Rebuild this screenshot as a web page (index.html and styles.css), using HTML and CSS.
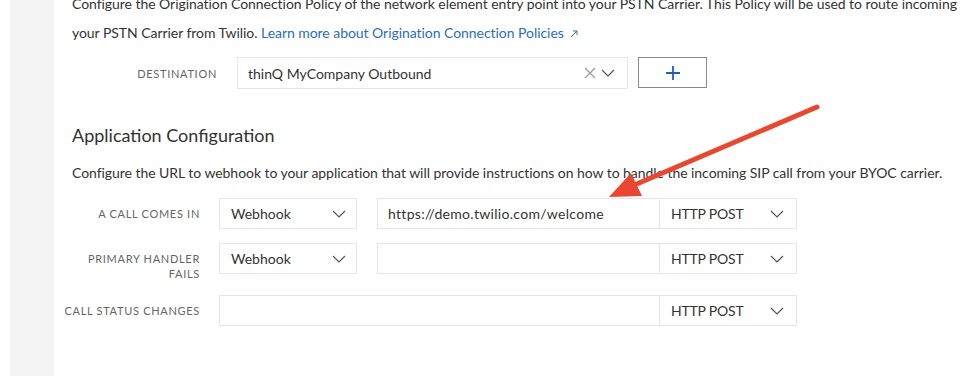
FILE: index.html
```html
<!DOCTYPE html>
<html>
<head>
  <title>Elastic SIP Trunk - Origination</title>
  <meta http-equiv="Content-Type" content="text/html; charset=UTF-8">
  <link rel="stylesheet" href="styles.css">
</head>
<body>
  <div class="page">
    <div class="rail"></div>

    <div class="main">
      <p class="intro">
        Configure the Origination Connection Policy of the network element entry point into your PSTN Carrier. This Policy will be used to route incoming<br>
        your PSTN Carrier from Twilio. <a href="#" class="link">Learn more about Origination Connection Policies
        <svg class="ext" width="8" height="8" viewBox="0 0 8 8"><path d="M1 7 L7 1 M3 1 H7 V5" fill="none" stroke="#2a6ebb" stroke-width="1"/></svg></a>
      </p>

      <div class="field-row dest-row">
        <label class="field-label">Destination</label>
        <div class="select dest-select">
          <span>thinQ MyCompany Outbound</span>
          <span class="select-icons">
            <svg width="14" height="14" viewBox="0 0 14 14"><path d="M2 2 L12 12 M12 2 L2 12" stroke="#9a9a9a" stroke-width="1.2" fill="none"/></svg>
            <svg class="chev" width="14" height="8" viewBox="0 0 14 8"><path d="M1 1 L7 7 L13 1" stroke="#555" stroke-width="1.2" fill="none"/></svg>
          </span>
        </div>
        <button type="button" class="add-btn">
          <svg width="14" height="14" viewBox="0 0 14 14"><path d="M7 0 V14 M0 7 H14" stroke="#1f5fb5" stroke-width="1.8"/></svg>
        </button>
      </div>

      <h2 class="section-title">Application Configuration</h2>
      <p class="section-desc">Configure the URL to webhook to your application that will provide instructions on how to handle the incoming SIP call from your BYOC carrier.</p>

      <div class="field-row app-row first">
        <label class="field-label">A Call Comes In</label>
        <div class="select type-select">
          <span>Webhook</span>
          <svg class="chev" width="14" height="8" viewBox="0 0 14 8"><path d="M1 1 L7 7 L13 1" stroke="#555" stroke-width="1.2" fill="none"/></svg>
        </div>
        <div class="url-group">
          <input class="url-input" type="text" value="https://demo.twilio.com/welcome">
          <div class="select method-select">
            <span>HTTP POST</span>
            <svg class="chev" width="14" height="8" viewBox="0 0 14 8"><path d="M1 1 L7 7 L13 1" stroke="#555" stroke-width="1.2" fill="none"/></svg>
          </div>
        </div>
      </div>

      <div class="field-row app-row second">
        <label class="field-label">Primary Handler<br>Fails</label>
        <div class="select type-select">
          <span>Webhook</span>
          <svg class="chev" width="14" height="8" viewBox="0 0 14 8"><path d="M1 1 L7 7 L13 1" stroke="#555" stroke-width="1.2" fill="none"/></svg>
        </div>
        <div class="url-group">
          <input class="url-input" type="text" value="">
          <div class="select method-select">
            <span>HTTP POST</span>
            <svg class="chev" width="14" height="8" viewBox="0 0 14 8"><path d="M1 1 L7 7 L13 1" stroke="#555" stroke-width="1.2" fill="none"/></svg>
          </div>
        </div>
      </div>

      <div class="field-row app-row third">
        <label class="field-label">Call Status Changes</label>
        <div class="url-group">
          <input class="url-input wide" type="text" value="">
          <div class="select method-select">
            <span>HTTP POST</span>
            <svg class="chev" width="14" height="8" viewBox="0 0 14 8"><path d="M1 1 L7 7 L13 1" stroke="#555" stroke-width="1.2" fill="none"/></svg>
          </div>
        </div>
      </div>
    </div>

    <!-- red annotation arrow drawn over the form -->
    <svg class="annotation" width="974" height="387" viewBox="0 0 974 387">
      <line x1="817" y1="107" x2="632" y2="186" stroke="#e9472f" stroke-width="5" stroke-linecap="round"/>
      <polygon points="609,197 631,173 642,196" fill="#e9472f"/>
    </svg>
  </div>
</body>
</html>
```

FILE: styles.css
```css
body {
  margin: 0;
  padding: 0;
  font-family: Lato, "Open Sans", sans-serif;
  color: #333;
  background: #fff;
  overflow: hidden;
}

.page {
  display: flex;
  position: relative;
  padding-left: 10px;
  height: 387px;
}

.rail {
  flex: none;
  width: 44px;
  height: 376px;
  background-color: #f4f4f4;
}

.main {
  flex: 1;
  margin-top: -11px;
}

.intro,
.section-desc {
  margin: 0;
  padding-left: 18px;
  font-size: 14px;
  letter-spacing: -0.05px;
  line-height: 28px;
  white-space: nowrap;
}

.intro {
  line-height: 29px;
}

.link {
  color: #2a6ebb;
  text-decoration: none;
}

.ext {
  margin-left: 3px;
}

.section-title {
  margin: 34px 0 12px;
  padding-left: 18px;
  font-size: 18px;
  font-weight: normal;
  line-height: 24px;
  color: #333;
}

.field-row {
  display: flex;
  align-items: flex-start;
}

.field-label {
  flex: none;
  text-align: right;
  font-size: 11px;
  letter-spacing: 0.7px;
  line-height: 15px;
  color: #666;
  text-transform: uppercase;
}

.select {
  display: flex;
  align-items: center;
  justify-content: space-between;
  box-sizing: border-box;
  border: 1px solid #e6e6e6;
  background: #fff;
  font-size: 14px;
  color: #333;
}

.chev {
  display: block;
}

/* destination */
.dest-row {
  margin-top: 10px;
}

.dest-row .field-label {
  width: 163px;
  padding-top: 9px;
}

.dest-select {
  margin-left: 20px;
  width: 391px;
  height: 32px;
  padding: 0 12px 0 10px;
}

.select-icons {
  display: flex;
  align-items: center;
  gap: 4px;
}

.add-btn {
  margin-left: 10px;
  width: 69px;
  height: 31px;
  border: 1px solid #8a8a8a;
  background: #fff;
  display: flex;
  align-items: center;
  justify-content: center;
  padding: 0;
}

.add-btn svg {
  display: block;
}

/* application rows */
.app-row .field-label {
  width: 146px;
  padding-top: 8px;
}

.app-row.first {
  margin-top: 11px;
}

.app-row.second {
  margin-top: 14px;
}

.app-row.third {
  margin-top: 14px;
}

.type-select {
  margin-left: 19px;
  width: 138px;
  height: 31px;
  padding: 0 10px 0 11px;
}

.url-group {
  display: flex;
  margin-left: 20px;
}

.app-row.third .url-group {
  margin-left: 19px;
}

.url-input {
  box-sizing: border-box;
  width: 282px;
  height: 31px;
  border: 1px solid #e6e6e6;
  border-right: none;
  padding: 0 10px;
  font-family: Lato, "Open Sans", sans-serif;
  font-size: 14px;
  letter-spacing: 0.3px;
  color: #333;
  outline: none;
}

.url-input.wide {
  width: 440px;
}

.method-select {
  width: 138px;
  height: 31px;
  padding: 0 12px 0 11px;
}

.method-select span {
  letter-spacing: -0.2px;
}

.annotation {
  position: absolute;
  left: 0;
  top: 0;
  pointer-events: none;
}
```
